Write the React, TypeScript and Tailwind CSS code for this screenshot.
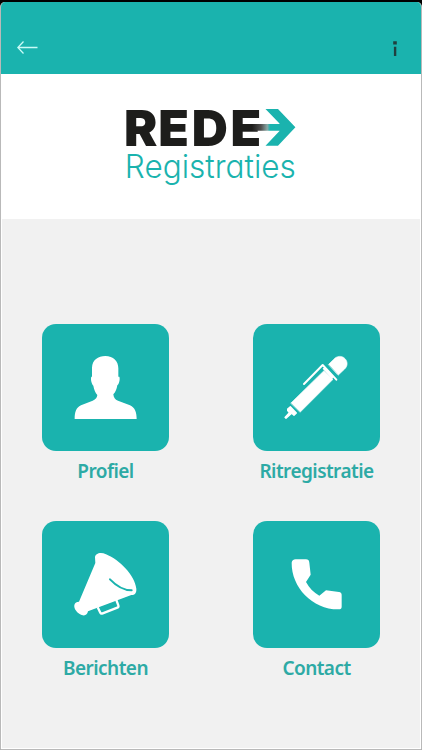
import type { ReactNode } from "react";

interface Tile {
  id: string;
  label: string;
  icon: ReactNode;
}

const tiles: Tile[] = [
  {
    id: "profiel",
    label: "Profiel",
    icon: (
      <path
        fill="white"
        d="M120 311C120 291 124 277 139 270L174 256C184 252 187 247 188 239C182 232 178 223 176 211C171 206 167 191 170 184H172V157C173 134 190 122 212 122C236 123 251 137 251 159V184H254C257 192 253 206 248 210C246 221 243 230 236 237C237 247 241 253 250 256L286 270C301 277 306 291 306 311Z"
      />
    ),
  },
  {
    id: "ritregistratie",
    label: "Ritregistratie",
    icon: (
      <g fill="white" stroke="white" strokeLinecap="round" strokeLinejoin="round">
        <path strokeWidth="2" d="M249 147L263 133C273 121 289 120 298 130C307 140 306 152 297 161L278 179Z" />
        <path strokeWidth="2" d="M136 263L235 166L262 192L164 290Z" />
        <path fill="none" strokeWidth="6" d="M175 206L231 149L272 193" />
        <path fill="none" strokeWidth="9" strokeLinecap="butt" d="M234 157L262 187" />
        <path strokeWidth="4" d="M134 274L152 293L145 300L138 294L121 309L118 306L131 292L126 286L126 281Z" />
      </g>
    ),
  },
  {
    id: "berichten",
    label: "Berichten",
    icon: (
      <>
        <path
          fill="white"
          d="M181 135C182 123 198 118 214 126C255 143 300 188 305 229C306 241 301 248 290 248L160 297C158 307 151 312 141 308C128 303 117 290 119 278C121 270 126 269 133 268L182 152Z"
        />
        <path fill="none" stroke="#1ab3ae" strokeWidth="6" strokeLinecap="round" d="M226 201C246 222 266 234 291 234" />
        <path
          fill="none"
          stroke="white"
          strokeWidth="7"
          strokeLinejoin="round"
          d="M189 285L197 301Q199 305 204 303L248 286Q253 284 251 279L245 263"
        />
      </>
    ),
  },
  {
    id: "contact",
    label: "Contact",
    icon: (
      <path
        fill="white"
        d="M150 141H181Q190 141 191 151L195 187L181 209C191 227 204 241 221 250L241 234L280 239Q288 240 288 248V283Q288 291 279 291C201 292 137 225 138 151Q139 142 150 141Z"
      />
    ),
  },
];

function Logo() {
  return (
    <svg viewBox="0 0 190 100" className="h-[100px] w-[190px]">
      <defs>
        <linearGradient id="shaft" x1="136" x2="154" y1="0" y2="0" gradientUnits="userSpaceOnUse">
          <stop offset="0" stopColor="#1d1d1b" />
          <stop offset="0.5" stopColor="#50504f" />
          <stop offset="0.85" stopColor="#8aa9a7" />
          <stop offset="1" stopColor="#1ab3ae" />
        </linearGradient>
      </defs>
      <text
        x="8 42.2 75.8 114.4"
        y="50.6"
        className="fill-[#1d1d1b] font-['Inter',sans-serif] text-[50px] font-black"
      >
        REDE
      </text>
      <path fill="url(#shaft)" d="M133 29H168V35.8H133Z" />
      <path fill="#1ab3ae" d="M149.5 14H162L179.4 32.3L162 50.7H149.5L163.5 36V28.6Z" />
      <text
        x="8.8"
        y="82.7"
        textLength="171"
        lengthAdjust="spacingAndGlyphs"
        className="fill-[#1ab3ae] font-['Inter',sans-serif] text-[33px] font-light [font-feature-settings:'cv11']"
      >
        Registraties
      </text>
    </svg>
  );
}

function MenuTile({ tile }: { tile: Tile }) {
  return (
    <button className="flex w-[127px] flex-col items-center">
      <span className="block size-[127px] rounded-[14px] bg-[#1ab3ae]">
        <svg viewBox="22 26 381 381" className="size-full">
          {tile.icon}
        </svg>
      </span>
      <span className="mt-[6px] mb-px font-['Noto_Sans',sans-serif] text-[19px] leading-[28px] font-semibold tracking-[-0.55px] whitespace-nowrap text-[#2daaa5]">
        {tile.label}
      </span>
    </button>
  );
}

export default function App() {
  return (
    <div className="h-[750px] w-[422px] bg-black pt-[2px]">
      <div className="flex h-[748px] flex-col overflow-hidden rounded-t-[5px] rounded-b-[1px] border-x border-b border-[#b9b9b9] bg-[#f1f1f1]">
        <header className="-mx-px flex h-[72px] shrink-0 items-end justify-between bg-[#1ab3ae] pr-[23px] pb-[16px] pl-[17px]">
          <button aria-label="Terug" className="pb-[4px]">
            <svg viewBox="0 0 21 13" className="h-[13px] w-[21px]" fill="none" stroke="#c9fbf7" strokeWidth="1.3">
              <path d="M20.5 6.5H0.8M6.5 0.5L0.8 6.5L6.5 12.5" />
            </svg>
          </button>
          <button aria-label="Info" className="pb-[2px]">
            <svg viewBox="0 0 8 15" className="h-[15px] w-[8px]" fill="#20403f">
              <path d="M2.2 0.2H5.8V3.4H2.2ZM2.9 5.7H5.3V15H2.9Z" />
            </svg>
          </button>
        </header>

        <div className="flex h-[145px] shrink-0 justify-center bg-white pt-[21px]">
          <Logo />
        </div>

        <main className="grid grow grid-cols-[127px_127px] content-start justify-center gap-x-[84px] gap-y-[35px] border-x border-b border-white pt-[105px]">
          {tiles.map((tile) => (
            <MenuTile key={tile.id} tile={tile} />
          ))}
        </main>
      </div>
    </div>
  );
}
